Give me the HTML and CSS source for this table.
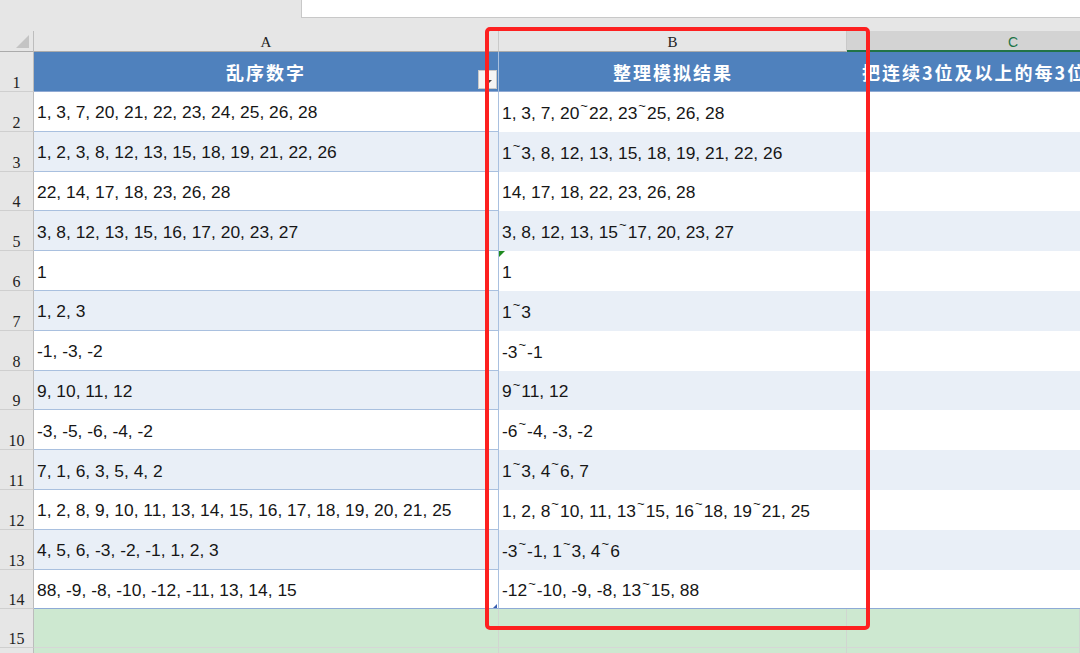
FILE: index.html
```html
<!DOCTYPE html>
<html lang="zh-CN">
<head>
<meta charset="utf-8">
<title>乱序数字整理</title>
<link rel="stylesheet" href="styles.css">
</head>
<body>
<div class="top"><div class="namebox"></div><div class="formula"></div></div>
<div class="spacer"></div>
<div class="sheet">
  <div class="row colhead">
    <div class="ch corner"><svg class="corner-tri" width="13" height="13" viewBox="0 0 13 13"><polygon points="13,0 13,13 0,13" fill="#c4c4c4"/></svg></div>
    <div class="ch">A</div>
    <div class="ch">B</div>
    <div class="ch sel">C</div>
  </div>
  <div class="row r1">
    <div class="rn">1</div>
    <div class="c h a">乱序数字<span class="filter"><span class="arrow"></span></span></div>
    <div class="c h">整理模拟结果</div>
    <div class="c h hc">把连续3位及以上的每3位</div>
  </div>
  <div class="row r">
    <div class="rn">2</div>
    <div class="c a">1, 3, 7, 20, 21, 22, 23, 24, 25, 26, 28</div>
    <div class="c">1, 3, 7, 20<span class="tl">~</span>22, 23<span class="tl">~</span>25, 26, 28</div>
    <div class="c"></div>
  </div>
  <div class="row r odd">
    <div class="rn">3</div>
    <div class="c a">1, 2, 3, 8, 12, 13, 15, 18, 19, 21, 22, 26</div>
    <div class="c">1<span class="tl">~</span>3, 8, 12, 13, 15, 18, 19, 21, 22, 26</div>
    <div class="c"></div>
  </div>
  <div class="row r">
    <div class="rn">4</div>
    <div class="c a">22, 14, 17, 18, 23, 26, 28</div>
    <div class="c">14, 17, 18, 22, 23, 26, 28</div>
    <div class="c"></div>
  </div>
  <div class="row r odd">
    <div class="rn">5</div>
    <div class="c a">3, 8, 12, 13, 15, 16, 17, 20, 23, 27</div>
    <div class="c">3, 8, 12, 13, 15<span class="tl">~</span>17, 20, 23, 27</div>
    <div class="c"></div>
  </div>
  <div class="row r">
    <div class="rn">6</div>
    <div class="c a">1</div>
    <div class="c">1<span class="flag"></span></div>
    <div class="c"></div>
  </div>
  <div class="row r odd">
    <div class="rn">7</div>
    <div class="c a">1, 2, 3</div>
    <div class="c">1<span class="tl">~</span>3</div>
    <div class="c"></div>
  </div>
  <div class="row r">
    <div class="rn">8</div>
    <div class="c a">-1, -3, -2</div>
    <div class="c">-3<span class="tl">~</span>-1</div>
    <div class="c"></div>
  </div>
  <div class="row r odd">
    <div class="rn">9</div>
    <div class="c a">9, 10, 11, 12</div>
    <div class="c">9<span class="tl">~</span>11, 12</div>
    <div class="c"></div>
  </div>
  <div class="row r">
    <div class="rn">10</div>
    <div class="c a">-3, -5, -6, -4, -2</div>
    <div class="c">-6<span class="tl">~</span>-4, -3, -2</div>
    <div class="c"></div>
  </div>
  <div class="row r odd">
    <div class="rn">11</div>
    <div class="c a">7, 1, 6, 3, 5, 4, 2</div>
    <div class="c">1<span class="tl">~</span>3, 4<span class="tl">~</span>6, 7</div>
    <div class="c"></div>
  </div>
  <div class="row r">
    <div class="rn">12</div>
    <div class="c a">1, 2, 8, 9, 10, 11, 13, 14, 15, 16, 17, 18, 19, 20, 21, 25</div>
    <div class="c">1, 2, 8<span class="tl">~</span>10, 11, 13<span class="tl">~</span>15, 16<span class="tl">~</span>18, 19<span class="tl">~</span>21, 25</div>
    <div class="c"></div>
  </div>
  <div class="row r odd">
    <div class="rn">13</div>
    <div class="c a">4, 5, 6, -3, -2, -1, 1, 2, 3</div>
    <div class="c">-3<span class="tl">~</span>-1, 1<span class="tl">~</span>3, 4<span class="tl">~</span>6</div>
    <div class="c"></div>
  </div>
  <div class="row r last">
    <div class="rn">14</div>
    <div class="c a">88, -9, -8, -10, -12, -11, 13, 14, 15<span class="handle"></span></div>
    <div class="c">-12<span class="tl">~</span>-10, -9, -8, 13<span class="tl">~</span>15, 88</div>
    <div class="c"></div>
  </div>
  <div class="row g">
    <div class="rn">15</div>
    <div class="c"></div>
    <div class="c"></div>
    <div class="c"></div>
  </div>
  <div class="row g16">
    <div class="rn"></div>
    <div class="c"></div>
    <div class="c"></div>
    <div class="c"></div>
  </div>
</div>
<div class="redbox"></div>
</body>
</html>
```
FILE: styles.css
```css
* { box-sizing: border-box; }
html, body { margin: 0; padding: 0; }
body {
  width: 1080px;
  height: 653px;
  overflow: hidden;
  background: #e6e6e6;
  font-family: "Liberation Sans", Arial, "Noto Sans CJK SC", sans-serif;
  position: relative;
}
.top { display: flex; height: 18px; }
.namebox { width: 301px; }
.formula {
  flex: 1;
  background: #fff;
  border-left: 1px solid #c8c8c8;
  border-bottom: 1px solid #c8c8c8;
}
.spacer { height: 13px; }

.sheet { width: 100%; }
.row {
  display: grid;
  grid-template-columns: 34px 465px 348px minmax(0, 1fr);
}
.colhead { height: 21px; }
.ch {
  display: flex;
  align-items: center;
  justify-content: center;
  border-right: 1px solid #c9c9c9;
  border-bottom: 1px solid #ababab;
  font-family: "Liberation Serif", serif;
  font-size: 15px;
  color: #222;
  padding-top: 2px;
}
.ch.corner { position: relative; border-right-color: #bdbdbd; }
.corner-tri { position: absolute; right: 4px; bottom: 3px; }
.ch.sel {
  background: #d3d3d3;
  border-right: none;
  border-bottom: 2px solid #217346;
  color: #217346;
  font-family: "Liberation Sans", sans-serif;
  font-size: 14px;
  justify-content: flex-start;
  padding-left: 161px;
}

.r1 { height: 40px; }
.r { height: 39.8px; }
.g { height: 39px; }
.g16 { height: 10px; }

.rn {
  display: flex;
  align-items: flex-end;
  justify-content: center;
  background: #e6e6e6;
  border-right: 1px solid #bcbcbc;
  border-bottom: 1px solid #cfcfcf;
  font-family: "Liberation Serif", serif;
  font-size: 16px;
  line-height: 16px;
  color: #222;
  padding-bottom: 0;
}

.c {
  display: flex;
  align-items: center;
  padding: 3px 0 0 3px;
  font-size: 17.4px;
  color: #161616;
  white-space: nowrap;
  overflow: hidden;
  background: #fff;
  position: relative;
  min-width: 0;
}
.c.a {
  border-right: 1px solid #a9c0df;
  border-bottom: 1px solid #a9c0df;
}
.odd .c { background: #e9eff7; }
.last .c { border-bottom: 1px solid #8eaad6; }

.tl {
  font-size: 0.75em;
  line-height: 1;
  align-self: flex-start;
  margin-top: 4px;
  padding: 0 1px;
}

.c.h {
  background: #4f81bd;
  color: #fff;
  font-family: "Noto Sans CJK SC", sans-serif;
  font-weight: bold;
  font-size: 18px;
  letter-spacing: 2px;
  justify-content: center;
  padding: 0;
  border-bottom: 1px solid #8fa9d3;
}
.c.h.a { border-right: 1px solid #a9c0df; border-bottom: 1px solid #8fa9d3; }
.c.h.hc { justify-content: flex-start; padding-left: 15px; overflow: hidden; }

.filter {
  position: absolute;
  right: 1px;
  top: 18px;
  width: 19px;
  height: 19px;
  background: #f4f4f4;
  border: 1px solid #c8c8c8;
}
.arrow {
  position: absolute;
  left: 7px;
  top: 9px;
  border-left: 3px solid transparent;
  border-right: 3px solid transparent;
  border-top: 3px solid #444;
}
.flag {
  position: absolute;
  left: 0;
  top: 0;
  border-top: 6px solid #1f8a1f;
  border-right: 6px solid transparent;
}
.handle {
  position: absolute;
  right: 1px;
  bottom: 0;
  border-bottom: 4px solid #3a5fb0;
  border-left: 4px solid transparent;
}

.g .c, .g16 .c {
  background: #cde8d0;
  border-right: 1px solid #d0d6d0;
  border-bottom: 1px solid #d6d6d6;
}

.redbox {
  position: absolute;
  left: 485px;
  top: 27px;
  width: 385px;
  height: 603px;
  border: 4px solid #fd2020;
  border-radius: 5px;
}
```
